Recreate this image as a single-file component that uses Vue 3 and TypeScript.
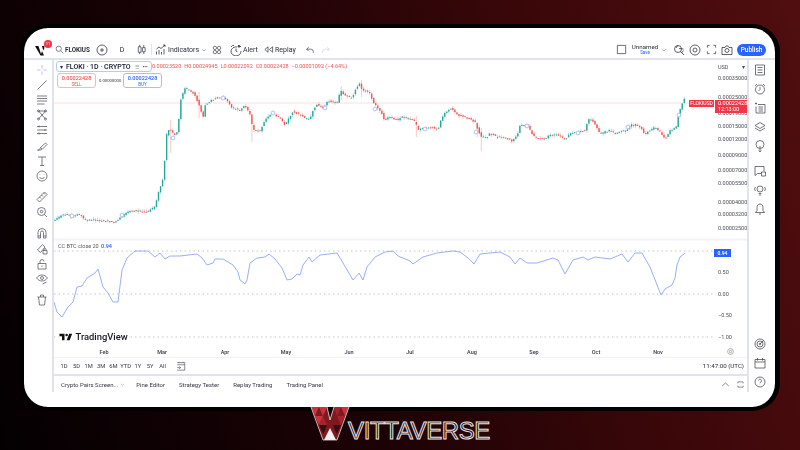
<script setup lang="ts">
import { h } from 'vue'

const circle = (x: number, y: number, r: number) =>
  `M${x - r} ${y}a${r} ${r} 0 1 0 ${r * 2} 0a${r} ${r} 0 1 0 ${-r * 2} 0`

const icons: Record<string, string> = {
  search: circle(10, 10, 7) + 'M15 15l7 7',
  plusCircle: circle(12, 12, 10) + 'M12 8v8M8 12h8',
  candle: 'M8 2v4M8 18v4M5 6h6v12H5zM17 2v6M17 17v5M14 8h6v9h-6z',
  indicators: 'M3 21v-6M8 21v-9M13 21v-5M18 21V10M3 10l5-4 4 3 8-7M16 2h4v4',
  chevron: 'M5 9l7 7 7-7',
  grid: circle(7, 7, 4) + circle(17, 7, 4) + circle(7, 17, 4) + circle(17, 17, 4),
  alert: 'M8 3H5L2 6M16 3h3l3 3M22 14a10 9 0 1 1-8-8M12 9v5l3 2M18 2v6M15 5h6',
  replay: 'M11 6l-7 6 7 6zM21 6l-7 6 7 6z',
  undo: 'M9 5L4 10l5 5M4 10h10a6 6 0 0 1 6 6v3',
  redo: 'M15 5l5 5-5 5M20 10H10a6 6 0 0 0-6 6v3',
  square: 'M3 3h18v18H3z',
  chartSearch: circle(10, 10, 7) + 'M15 15l7 7M10 2L6 8M12 9l9 1M17 18l4-5',
  gear: circle(12, 12, 10) + circle(12, 12, 4),
  fullscreen: 'M3 8V3h5M16 3h5v5M21 16v5h-5M8 21H3v-5',
  camera: 'M2 7h6l2-3h4l2 3h6v14H2z' + circle(12, 13, 4),
  cross: 'M12 2v7M12 15v7M2 12h7M15 12h7M11.5 12h1',
  line: 'M3 21L21 3',
  fib: 'M2 4h20M2 9h20M2 14h20M2 20h15',
  pattern: 'M5 4l14 16M19 4L5 20M5 4h14' + circle(5, 4, 2) + circle(19, 4, 2) + circle(5, 20, 2) + circle(19, 20, 2),
  position: 'M2 5h20M2 12h20M2 19h20M6 3v4M18 10v4M6 17v4',
  brush: 'M3 20c4 0 5-2 6-5l10-9 3 3-9 9c-3 2-7 3-10 2zM9 15l3 3',
  text: 'M4 4h16M12 4v17M8 21h8',
  smile: circle(12, 12, 10) + 'M8 9v1M16 9v1M7 14c2 4 8 4 10 0',
  ruler: 'M2 17L17 2l5 5L7 22zM7 12l3 3M11 8l3 3M15 4l3 3',
  zoom: circle(11, 11, 8) + circle(11, 11, 2.5) + 'M17 17l5 5',
  magnet: 'M4 22V11a8 8 0 0 1 16 0v11h-5V11a3 3 0 0 0-6 0v11zM4 18h5M15 18h5',
  pencilLock: 'M3 14L13 3l5 5-9 11zM14 15h8v7h-8zM16 15v-2a2 2 0 0 1 4 0v2',
  lock: 'M4 11h16v11H4zM8 11V7a4 4 0 0 1 8 0M12 15v3',
  eye: 'M1 10c6-8 16-8 22 0-6 8-16 8-22 0z' + circle(12, 10, 3) + 'M13 22l8-4',
  trash: 'M3 6h18M9 6V2h6v4M5 6l2 16h10l2-16',
  news: 'M3 2h18v20H3zM7 7h10M7 12h10M7 17h10',
  alarm: circle(12, 13, 9) + 'M12 8v5l-3 3M2 6l4-4M22 6l-4-4',
  watch: 'M8 5h14v17H4V9M9 10h9M9 14h9M9 18h9M2 3h4M4 1v4',
  layers: 'M12 3l10 6-10 6L2 9zM2 14l10 6 10-6',
  bulb: circle(12, 9, 8) + 'M9 20h6M10 23h4M12 17v-5',
  chat: 'M2 3h18v10M2 3v18l5-4h7M15 14h8v8h-8z',
  broadcast: circle(12, 10, 6) + 'M9 19h6M10 22h4M3 6l-2 4 2 4M21 6l2 4-2 4',
  bell: 'M12 2C8 2 6 5 6 9v6l-3 4h18l-3-4V9c0-4-2-7-6-7zM10 22h4',
  target: circle(12, 12, 10) + circle(12, 12, 6) + circle(12, 12, 1.5) + 'M12 12l8-8',
  calendar: 'M2 5h20v17H2zM2 10h20M7 2v5M17 2v5',
  help: circle(12, 12, 10) + 'M9 9a3 3 0 1 1 4.5 3c-1 .6-1.5 1.2-1.5 2.5M12 17.5v.5',
  dateRange: 'M3 4h18v18H3M3 9h18M7 2v3M17 2v3M3 16h8M8 13l3 3-3 3',
  expand: 'M5 9V5h14v4M5 15v4h14v-4',
  chevronUp: 'M3 16l9-8 9 8',
}

const Icon = (props: { name: string; size?: number }) =>
  h(
    'svg',
    { width: props.size ?? 13, height: props.size ?? 13, viewBox: '0 0 24 24', fill: 'none', stroke: 'currentColor', 'stroke-width': 1.5 },
    [h('path', { d: icons[props.name] })],
  )

// price path, traced in page pixels
const pricePath: [number, number][] = [
  [55, 220], [62, 215], [66, 214], [72, 217], [80, 214], [85, 220], [95, 220], [105, 221], [115, 222], [122, 216], [130, 211],
  [140, 211], [148, 212], [155, 206], [160, 187], [162, 185], [165, 157], [167, 130], [170, 130], [175, 135], [178, 130],
  [180, 102], [185, 88], [190, 90], [195, 95], [200, 108], [203, 118], [205, 105], [215, 98], [225, 98], [232, 108], [240, 110],
  [245, 105], [250, 115], [253, 130], [260, 131], [265, 120], [272, 113], [280, 118], [285, 125], [293, 111], [300, 115],
  [305, 118], [310, 119], [313, 110], [317, 104], [323, 108], [328, 101], [338, 103], [340, 90], [345, 96], [352, 98], [355, 90],
  [360, 83], [362, 90], [370, 93], [373, 102], [378, 108], [382, 114], [384, 120], [390, 117], [398, 120], [402, 117], [410, 119],
  [415, 122], [418, 130], [422, 128], [428, 128], [433, 127], [438, 130], [440, 122], [445, 113], [451, 108], [458, 115],
  [465, 117], [472, 120], [475, 122], [478, 130], [481, 137], [487, 137], [490, 133], [497, 137], [505, 138], [512, 141],
  [517, 136], [520, 126], [527, 125], [530, 130], [535, 138], [545, 139], [550, 135], [558, 135], [565, 139], [570, 134],
  [578, 132], [585, 130], [588, 120], [592, 120], [596, 127], [600, 134], [610, 130], [615, 134], [620, 132], [627, 130],
  [632, 124], [640, 127], [645, 134], [650, 130], [655, 127], [660, 132], [665, 139], [670, 130], [676, 128], [678, 117],
  [682, 104], [684, 99], [685, 100],
]

const correlation: [number, number][] = [
  [54, 302], [57, 312], [62, 317], [68, 307], [73, 302], [77, 287], [82, 286], [87, 278], [95, 273], [98, 269], [103, 287],
  [108, 293], [113, 302], [118, 302], [122, 270], [127, 258], [135, 251], [148, 251], [155, 257], [160, 253], [165, 259],
  [170, 256], [180, 256], [197, 254], [202, 258], [207, 265], [213, 263], [215, 259], [223, 259], [233, 265], [238, 272],
  [240, 280], [245, 284], [247, 280], [250, 263], [257, 258], [265, 257], [269, 254], [275, 259], [282, 268], [287, 280],
  [292, 279], [297, 274], [300, 275], [303, 265], [309, 257], [312, 262], [320, 255], [337, 253], [343, 263], [353, 280],
  [359, 273], [363, 280], [367, 267], [375, 257], [385, 252], [393, 251], [398, 256], [410, 261], [413, 264], [423, 257],
  [437, 253], [453, 251], [460, 252], [468, 258], [474, 264], [480, 254], [500, 252], [510, 257], [515, 264], [520, 258],
  [527, 263], [537, 263], [553, 258], [558, 260], [565, 274], [573, 260], [583, 257], [588, 260], [595, 257], [610, 259],
  [622, 254], [628, 262], [635, 253], [642, 253], [650, 267], [661, 295], [665, 289], [672, 285], [675, 278], [677, 265],
  [680, 257], [685, 253],
]
const correlationPoints = correlation.map((p) => p.join(',')).join(' ')

let seed = 42
const rnd = () => {
  seed = (seed * 16807) % 2147483647
  return seed / 2147483647
}

function priceAt(x: number) {
  for (let i = 1; i < pricePath.length; i++) {
    const [x0, y0] = pricePath[i - 1]
    const [x1, y1] = pricePath[i]
    if (x <= x1) return y0 + ((y1 - y0) * (x - x0)) / (x1 - x0)
  }
  return 100
}

const longWicks: Record<number, [number, number]> = {
  172: [120, 153], 200: [92, 118], 253: [118, 142], 341: [86, 100], 362: [80, 97], 417: [116, 137], 481: [128, 151], 478: [122, 137],
}

const candles = Array.from({ length: 311 }, (_, i) => {
  const x = 55 + i * 2.03
  const open = priceAt(x - 2.03) + (rnd() - 0.5) * 1.6
  const close = priceAt(x) + (rnd() - 0.5) * 1.6
  const top = Math.min(open, close)
  const bottom = Math.max(open, close)
  const spike = longWicks[Math.round(x)] ?? longWicks[Math.round(x) + 1]
  return {
    x,
    top,
    height: Math.max(bottom - top, 0.9),
    wickTop: spike ? spike[0] : top - rnd() * 2.4,
    wickBottom: spike ? spike[1] : bottom + rnd() * 2.4,
    color: close < open ? '#26a69a' : '#ef5350',
  }
})

const markers: [number, number][] = [
  [72, 216], [122, 215], [173, 138], [223, 98], [273, 113], [325, 108], [375, 109], [425, 129], [476, 132], [527, 126], [578, 133], [628, 127], [679, 115],
]

const priceLabels: [string, number][] = [
  ['0.00035000', 78], ['0.00025000', 97], ['0.00019000', 113], ['0.00015000', 126], ['0.00012000', 139], ['0.00009000', 155],
  ['0.00007000', 170], ['0.00005500', 183], ['0.00004000', 202], ['0.00003200', 214], ['0.00002500', 228],
]
const corrLabels: [string, number][] = [['0.50', 272], ['0.00', 294], ['−0.50', 315], ['−1.00', 337]]
const months: [string, number][] = [
  ['Feb', 104], ['Mar', 162], ['Apr', 225], ['May', 286], ['Jun', 349], ['Jul', 410], ['Aug', 472], ['Sep', 534], ['Oct', 596], ['Nov', 658],
]

const leftGroups = [
  ['cross', 'line', 'fib', 'pattern', 'position', 'brush', 'text', 'smile'],
  ['ruler', 'zoom'],
  ['magnet', 'pencilLock', 'lock', 'eye'],
  ['trash'],
]
const rightTop = ['news', 'alarm', 'watch', 'layers', 'bulb']
const rightMid = ['chat', 'broadcast', 'bell']
const rightBottom = ['target', 'calendar', 'help']
const ranges = ['1D', '5D', '1M', '3M', '6M', 'YTD', '1Y', '5Y', 'All']
</script>

<template>
  <div class="page">
    <div class="frame">
      <header class="topbar">
        <div class="logo">
          <svg width="14" height="14" viewBox="0 0 14 14">
            <path d="M0 3h3.5l2.500 8 1-3 2 4.500H5.500zM7 3h2.500L9 7.500 7.800 6z" fill="#111" />
          </svg>
          <span class="badge">11</span>
        </div>
        <Icon class="m6" name="search" :size="9" />
        <span class="symbol"><b>FLOKIUSD</b></span>
        <Icon class="m6" name="plusCircle" :size="12" />
        <span class="interval">D</span>
        <Icon class="m10" name="candle" :size="11" />
        <i class="sep"></i>
        <Icon class="m3" name="indicators" :size="12" />
        <span class="label w26">Indicators</span>
        <Icon class="m7" name="chevron" :size="6" />
        <Icon class="m5" name="grid" :size="10" />
        <Icon class="m8" name="alert" :size="12" />
        <span class="label w14">Alert</span>
        <Icon class="m5" name="replay" :size="11" />
        <span class="label w18">Replay</span>
        <Icon class="m12" name="undo" :size="10" />
        <Icon class="m6 faint" name="redo" :size="10" />
        <div class="spacer"></div>
        <Icon name="square" :size="11" />
        <div class="layout-name">
          <span>Unnamed</span>
          <small>Save</small>
        </div>
        <Icon class="m3" name="chevron" :size="6" />
        <Icon class="m6" name="chartSearch" :size="12" />
        <Icon class="m4" name="gear" :size="12" />
        <Icon class="m5" name="fullscreen" :size="11" />
        <Icon class="m4" name="camera" :size="12" />
        <button class="publish">Publish</button>
      </header>

      <div class="workspace">
        <nav class="left-rail">
          <div v-for="(group, g) in leftGroups" :key="g" class="rail-group">
            <span v-for="name in group" :key="name" class="rail-item" :class="{ accent: name === 'cross' }">
              <Icon :name="name" :size="12" />
            </span>
          </div>
        </nav>

        <main class="center">
          <div class="chart">
            <svg class="plot" width="693" height="297" viewBox="54 60 693 297">
              <line x1="54" x2="717" y1="103" y2="103" stroke="#fbdfe2" stroke-width="1" />
              <g v-for="(c, i) in candles" :key="i">
                <line :x1="c.x" :x2="c.x" :y1="c.wickTop" :y2="c.wickBottom" :stroke="c.color" stroke-width="0.7" opacity="0.45" />
                <rect :x="c.x - 0.7" :y="c.top" width="1.4" :height="c.height" :fill="c.color" />
              </g>
              <circle v-for="(m, i) in markers" :key="'m' + i" :cx="m[0]" :cy="m[1]" r="1.9" fill="#fff" stroke="#9db4f5" stroke-width="0.8" />

              <line x1="54" x2="747" y1="239.500" y2="239.500" stroke="#f0f3fa" stroke-width="2" />
              <g stroke="#b2b5be" stroke-width="0.8" stroke-dasharray="1.500 3">
                <line x1="54" x2="713" y1="251" y2="251" />
                <line x1="54" x2="713" y1="294" y2="294" />
                <line x1="54" x2="713" y1="337" y2="337" />
              </g>
              <polyline :points="correlationPoints" fill="none" stroke="#8ca6f5" stroke-width="0.9" />

              <g class="axis">
                <text x="718" y="69">USD</text>
                <text x="742" y="69">▾</text>
                <text v-for="p in priceLabels" :key="p[0]" x="718" :y="p[1] + 2">{{ p[0] }}</text>
                <text v-for="p in corrLabels" :key="p[0]" x="718" :y="p[1] + 2">{{ p[0] }}</text>
              </g>
              <g class="months">
                <text v-for="m in months" :key="m[0]" :x="m[1]" y="354" text-anchor="middle">{{ m[0] }}</text>
              </g>
            </svg>

            <div class="legend">
              <span class="legend-mark">▾</span>
              <b>FLOKI · 1D · CRYPTO</b>
              <span class="legend-eye">☰</span>
              <span class="legend-more">•••</span>
            </div>
            <div class="ohlc">
              <span>0.00023520</span><span>H0.00024945</span><span>L0.00022092</span><span>C0.00022428</span><span>−0.00001092 (−4.64%)</span>
            </div>
            <div class="trade sell"><b>0.00022428</b><small>SELL</small></div>
            <span class="spread">0.00000000</span>
            <div class="trade buy"><b>0.00022428</b><small>BUY</small></div>

            <span class="tag-symbol">FLOKIUSD</span>
            <div class="tag-price"><span>0.00022428</span><span>12:13:00</span></div>

            <div class="series-name">CC BTC close 20 <em>0.94</em></div>
            <span class="corr-tag">0.94</span>

            <div class="tv-logo">
              <svg width="14" height="8" viewBox="1 5 33 17"><path d="M14 6H2v6h6v9h6V6Zm12 15h-7l6-15h7l-6 15Zm-7-9a3 3 0 1 0 0-6 3 3 0 0 0 0 6Z" fill="#111" /></svg>
              <span>TradingView</span>
            </div>
            <Icon class="axis-gear" name="gear" :size="7" />
          </div>

          <div class="range-row">
            <span v-for="r in ranges" :key="r" class="range">{{ r }}</span>
            <Icon class="range-cal" name="dateRange" :size="10" />
            <span class="clock">11:47:00 (UTC)</span>
          </div>

          <div class="tabs">
            <span class="tab first">Crypto Pairs Screen...</span>
            <Icon class="tab-chevron" name="chevron" :size="5" />
            <span class="tab">Pine Editor</span>
            <span class="tab">Strategy Tester</span>
            <span class="tab">Replay Trading</span>
            <span class="tab">Trading Panel</span>
            <div class="tabs-gap"></div>
            <Icon name="chevronUp" :size="9" />
            <Icon class="m6" name="expand" :size="9" />
          </div>
        </main>

        <aside class="right-rail">
          <div class="rail-stack">
            <span v-for="name in rightTop" :key="name" class="side-item"><Icon :name="name" :size="12" /></span>
          </div>
          <div class="rail-stack mid">
            <span v-for="name in rightMid" :key="name" class="side-item"><Icon :name="name" :size="12" /></span>
          </div>
          <div class="rail-stack bottom">
            <span v-for="name in rightBottom" :key="name" class="side-item"><Icon :name="name" :size="12" /></span>
          </div>
        </aside>
      </div>
    </div>

    <footer class="brand">
      <svg width="40" height="34" viewBox="0 0 40 34">
        <path d="M1 0h16l3 12 4-12h15L27 33H13z" fill="#7e1a1f" />
        <path d="M1 0h8L5 9zM9 0h8l-4 9zM5 9h8l-4 9zM31 0h8l-4 9z" fill="#c9333b" />
        <path d="M13 9l4 9H9zM24 0h7l-4 9zM27 9h8l-4 9z" fill="#a3252b" />
        <path d="M9 18h8l-3.500 9zM31 18h-8l3.500 9z" fill="#3a0a0d" />
        <path d="M14 33l6-12 6 12z" fill="#f2f2f2" />
        <path d="M1 0l12 33h14L39 0M17 0l3 13 4-13" fill="none" stroke="#e6dede" stroke-width="0.8" />
      </svg>
      <span class="brand-name">VITTAVERSE</span>
    </footer>
  </div>
</template>

<style scoped>
.page {
  width: 800px;
  height: 450px;
  box-sizing: border-box;
  padding-top: 24px;
  overflow: hidden;
  font-family: Roboto, "Liberation Sans", sans-serif;
  color: #2a2e39;
  background: linear-gradient(72deg, #040002 0%, #1c0205 40%, #3a0709 70%, #500e0f 100%);
}

.frame {
  box-sizing: border-box;
  width: 760px;
  height: 387px;
  margin-left: 20px;
  background: #fff;
  border: 4px solid #000;
  border-right-width: 5px;
  border-radius: 28px;
  overflow: hidden;
  filter: blur(0.3px);
}

.topbar {
  display: flex;
  align-items: center;
  box-sizing: border-box;
  height: 32px;
  padding: 13px 9px 0 11px;
  border-bottom: 2px solid #e0e3eb;
  font-size: 7px;
}

.topbar > * {
  flex: none;
}

.topbar > .spacer {
  flex: 1;
}

.logo {
  position: relative;
  width: 14px;
  height: 14px;
}

.badge {
  position: absolute;
  top: -3px;
  right: -3px;
  width: 8px;
  height: 8px;
  border-radius: 50%;
  background: #f23645;
  color: #fff;
  font-size: 4px;
  line-height: 8px;
  text-align: center;
}

.symbol {
  width: 25px;
  margin-left: 1px;
  overflow: hidden;
  white-space: nowrap;
  font-size: 6.3px;
}

.interval {
  width: 8px;
  margin-left: 10px;
  text-align: center;
}

.sep {
  width: 1px;
  height: 11px;
  margin-left: 4px;
  background: #e0e3eb;
}

.label {
  margin-left: 1px;
  white-space: nowrap;
}

.w26 { width: 26px; }
.w14 { width: 15px; }
.w18 { width: 18px; }
.m3 { margin-left: 3px; }
.m4 { margin-left: 4px; }
.m5 { margin-left: 5px; }
.m6 { margin-left: 6px; }
.m7 { margin-left: 7px; }
.m8 { margin-left: 8px; }
.m12 { margin-left: 12px; }
.m10 { margin-left: 10px; }

.faint {
  color: #c8cbd3;
}

.layout-name {
  display: flex;
  flex-direction: column;
  align-items: center;
  width: 26px;
  margin-left: 5px;
  font-size: 6.2px;
  line-height: 6px;
}

.layout-name small {
  color: #2962ff;
  font-size: 4.5px;
  line-height: 5px;
}

.publish {
  width: 29px;
  height: 12px;
  margin-left: 4px;
  padding: 0;
  border: 0;
  border-radius: 6px;
  background: #2962ff;
  color: #fff;
  font: 500 6.500px Roboto, sans-serif;
}

.workspace {
  display: flex;
  height: 332px;
}

.left-rail {
  box-sizing: border-box;
  flex: none;
  display: flex;
  flex-direction: column;
  gap: 6px;
  width: 30px;
  padding: 2px 0 0 8px;
  border-right: 2px solid #e0e3eb;
}

.rail-item {
  display: flex;
  align-items: center;
  justify-content: center;
  height: 15.2px;
  color: #50535e;
}

.rail-item.accent {
  color: #a6b3f2;
}

.center {
  flex: 1;
  display: flex;
  flex-direction: column;
  min-width: 0;
}

.chart {
  position: relative;
  height: 297px;
  border-bottom: 1.500px solid #f0f3fa;
}

.plot {
  display: block;
}

.axis {
  font-size: 5.500px;
  fill: #4a4e59;
}

.months {
  font-size: 5.500px;
  font-weight: 500;
  fill: #363a45;
}

.legend {
  position: absolute;
  top: 1px;
  left: 2px;
  display: flex;
  align-items: center;
  box-sizing: border-box;
  width: 96px;
  height: 11px;
  padding: 0 3px;
  border: 1px solid #b9c8fb;
  border-radius: 3px;
  background: #fff;
  font-size: 7px;
  white-space: nowrap;
}

.legend b {
  font-weight: 500;
  margin-left: 3px;
  color: #131722;
}

.legend-mark {
  font-size: 6px;
}

.legend-eye {
  margin-left: 4px;
  font-size: 5px;
  color: #9598a1;
}

.legend-more {
  margin-left: 4px;
  font-size: 5px;
}

.ohlc {
  position: absolute;
  top: 3px;
  left: 98px;
  display: flex;
  gap: 3px;
  font-size: 5.500px;
  color: #ef5350;
  white-space: nowrap;
}

.trade {
  position: absolute;
  top: 13px;
  display: flex;
  flex-direction: column;
  align-items: center;
  box-sizing: border-box;
  width: 39px;
  height: 15px;
  padding-top: 2px;
  border: 1px solid;
  border-radius: 3px;
  background: #fff;
  line-height: 5.500px;
}

.trade b {
  font-size: 5.500px;
  font-weight: 500;
}

.trade small {
  font-size: 4.500px;
}

.sell {
  left: 3px;
  border-color: #f7b8bd;
  color: #ef5350;
}

.buy {
  left: 69px;
  border-color: #a8bdfb;
  color: #2962ff;
}

.spread {
  position: absolute;
  top: 18px;
  left: 45px;
  font-size: 4.200px;
  color: #333;
}

.tag-symbol {
  position: absolute;
  top: 40px;
  left: 635px;
  width: 25px;
  height: 7px;
  background: #f23645;
  color: #fff;
  font-size: 5px;
  line-height: 7px;
  text-align: center;
}

.tag-price {
  position: absolute;
  top: 39.500px;
  left: 661px;
  display: flex;
  flex-direction: column;
  box-sizing: border-box;
  width: 32px;
  height: 13px;
  padding: 0.500px 0 0 3px;
  background: #f23645;
  color: #fff;
  font-size: 5.500px;
  line-height: 6px;
}

.series-name {
  position: absolute;
  top: 183px;
  left: 4px;
  font-size: 5.500px;
  color: #555964;
}

.series-name em {
  margin-left: 1px;
  color: #2962ff;
  font-style: normal;
  font-weight: 500;
}

.corr-tag {
  position: absolute;
  top: 189px;
  left: 660px;
  width: 17px;
  height: 8px;
  background: #2962ff;
  color: #fff;
  font-size: 5px;
  font-weight: 500;
  line-height: 8px;
  text-align: center;
}

.tv-logo {
  position: absolute;
  top: 271px;
  left: 5px;
  display: flex;
  align-items: center;
  gap: 2.500px;
  padding-right: 2px;
  background: #fff;
  color: #131722;
  font-size: 9.400px;
  font-weight: 500;
  line-height: 12px;
}

.axis-gear {
  position: absolute;
  top: 288px;
  left: 673px;
  color: #555;
}

.range-row {
  display: flex;
  align-items: center;
  box-sizing: border-box;
  height: 18px;
  padding: 0 3px 0 4px;
  border-bottom: 2px solid #e0e3eb;
  font-size: 5.800px;
}

.range {
  width: 12.300px;
  text-align: center;
  color: #363a45;
}

.range-cal {
  margin-left: 7px;
  color: #434651;
}

.clock {
  margin-left: auto;
  font-size: 6.200px;
  color: #2a2e39;
}

.tabs {
  display: flex;
  align-items: center;
  box-sizing: border-box;
  height: 16px;
  padding: 0 2.500px 0 7px;
  font-size: 6px;
  color: #363a45;
}

.tabs > * {
  flex: none;
}

.tabs > .tabs-gap {
  flex: 1;
}

.tab {
  white-space: nowrap;
  margin-right: 14px;
}

.tab.first {
  margin-right: 2px;
}

.tab-chevron {
  margin-right: 11px;
}

.right-rail {
  box-sizing: border-box;
  flex: none;
  display: flex;
  flex-direction: column;
  width: 28px;
  padding-right: 4px;
  border-left: 2px solid #e0e3eb;
}

.rail-stack.mid {
  margin-top: 5px;
}

.rail-stack.bottom {
  margin-top: auto;
}

.side-item {
  display: flex;
  align-items: center;
  justify-content: center;
  height: 19.200px;
  color: #434651;
}

.brand {
  position: relative;
  display: flex;
  align-items: flex-end;
  justify-content: center;
  height: 34px;
  margin-top: -4px;
}

.brand-name {
  margin: 0 0 0 -2px;
  color: #1a0204;
  font-family: "Liberation Sans", sans-serif;
  font-size: 24px;
  letter-spacing: -0.4px;
  line-height: 21px;
  -webkit-text-stroke: 1px #e8e4e4;
}
</style>

<style>
html,
body {
  margin: 0;
  background: #000;
}
</style>
